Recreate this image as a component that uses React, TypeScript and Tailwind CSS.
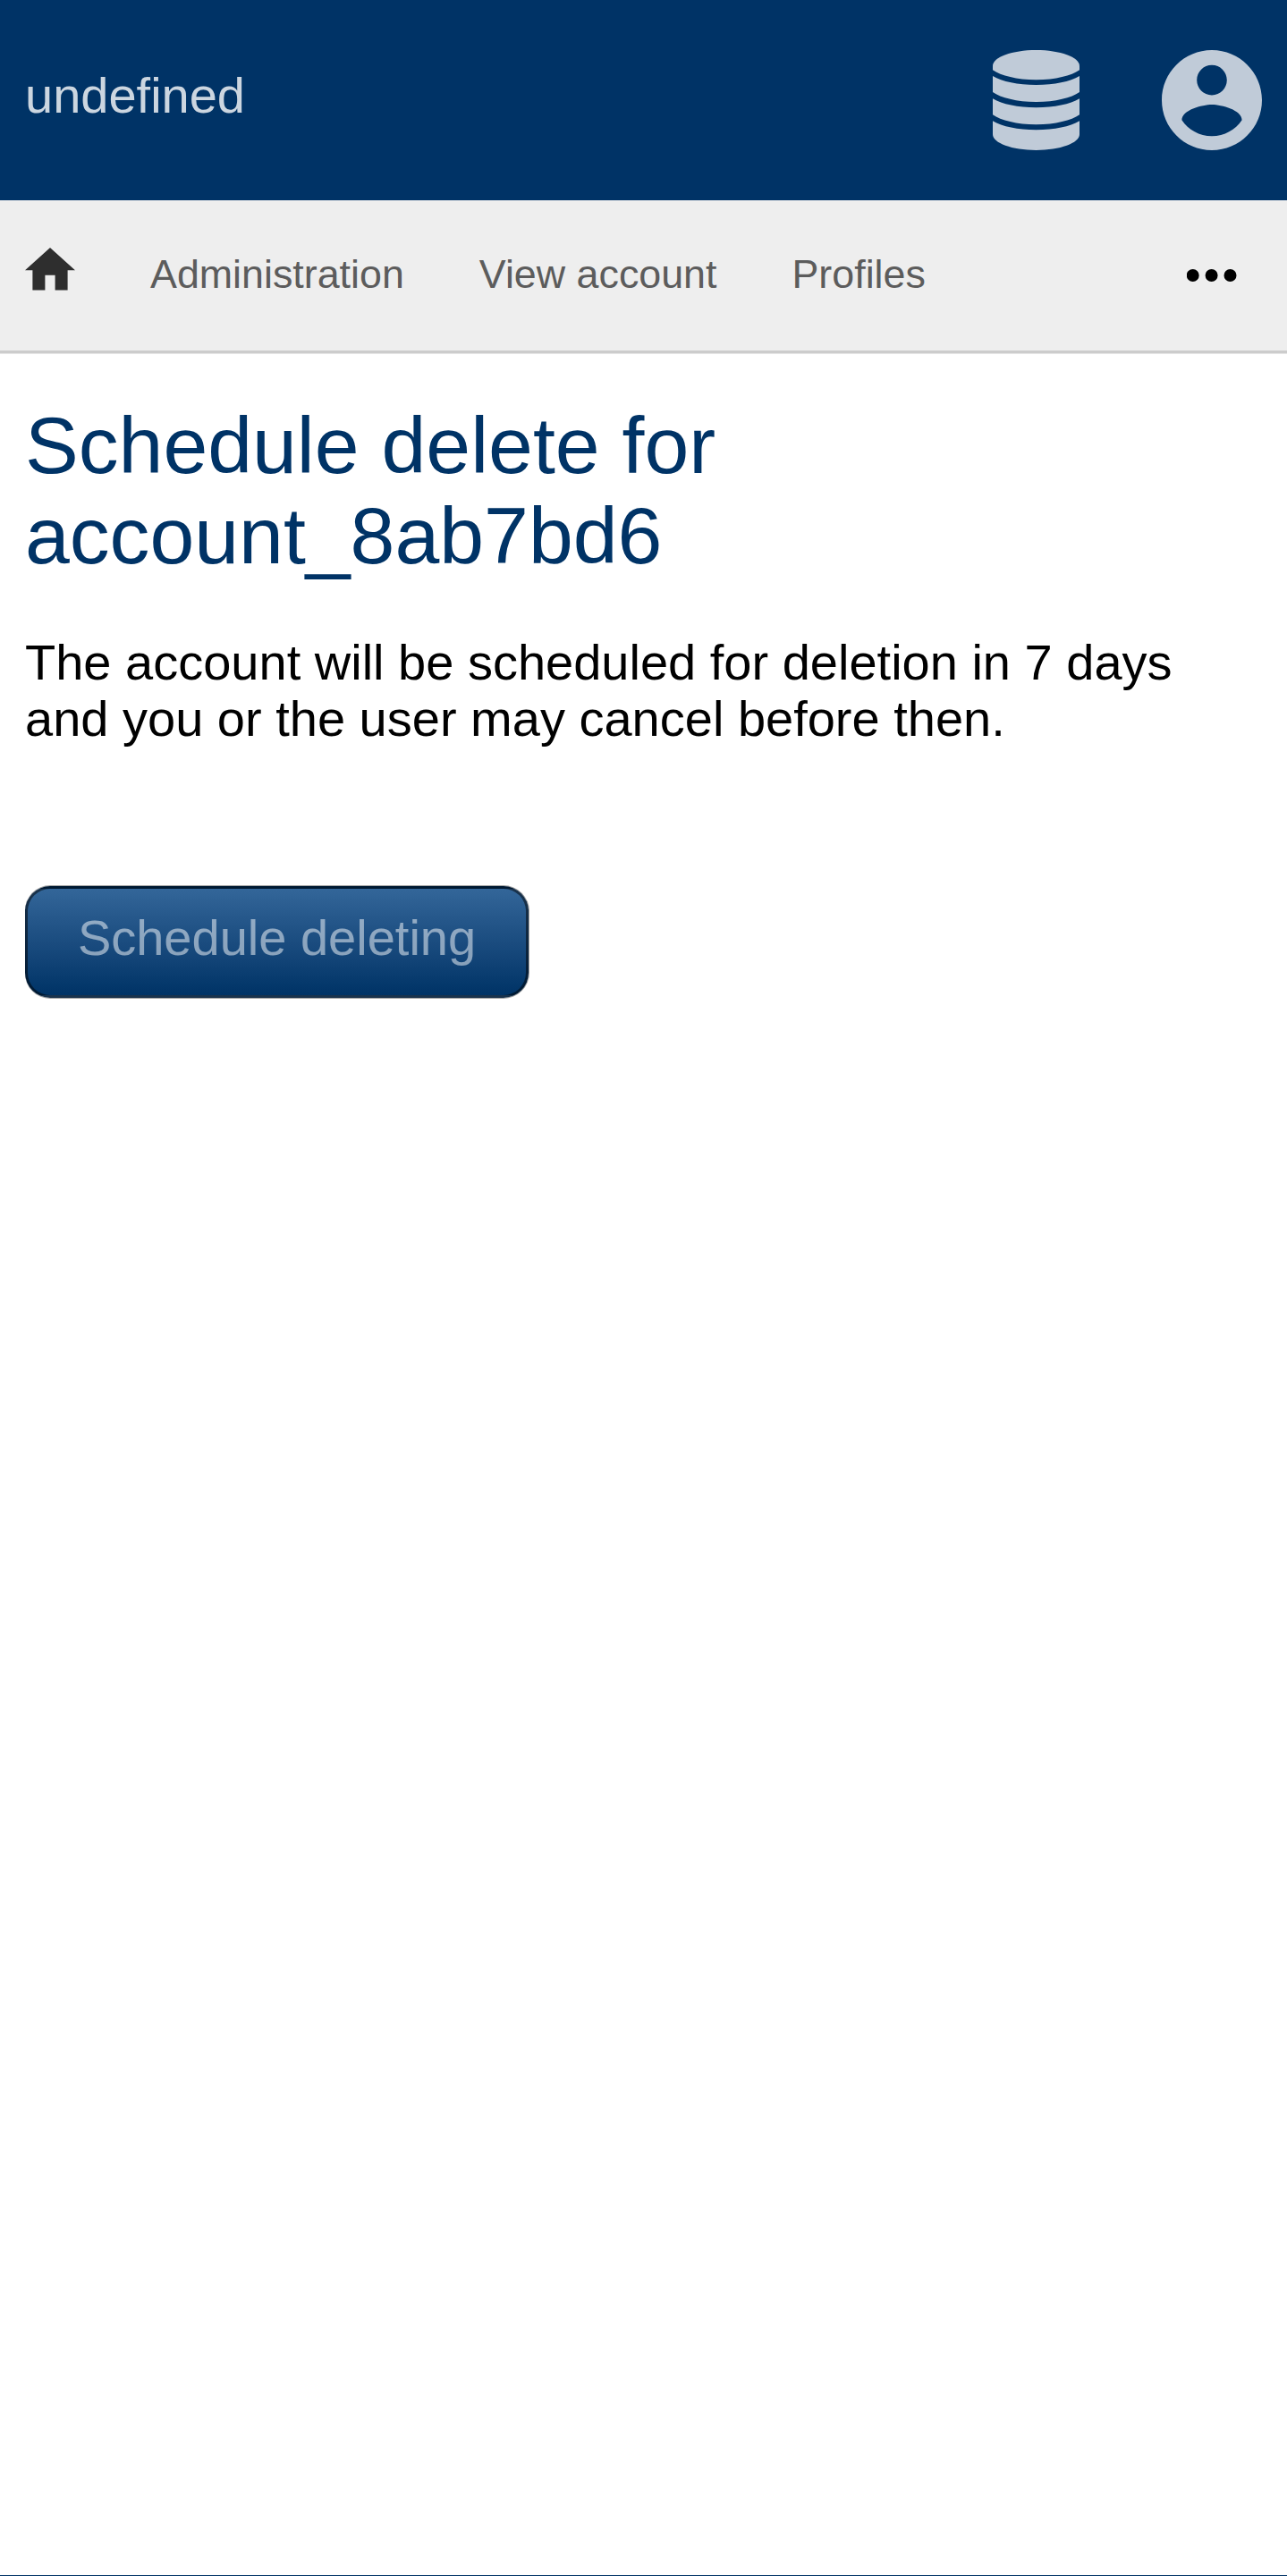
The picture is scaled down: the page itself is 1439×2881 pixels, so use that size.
const navItems = ["Administration", "View account", "Profiles"];

function DatabaseIcon() {
  return (
    <svg className="h-[112px] w-[97px]" viewBox="0 0 291 336" fill="#c0cbd8" aria-hidden="true">
      <path d="M0 53C0 24 65 0 145.500 0S291 24 291 53V67C264 86 210 100 145.500 100S27 86 0 67Z" />
      <path d="M0 87C32 106 84 117 145.500 117S259 106 291 87V141C264 160 210 174 145.500 174S27 160 0 141Z" />
      <path d="M0 163C32 182 84 193 145.500 193S259 182 291 163V217C264 236 210 250 145.500 250S27 236 0 217Z" />
      <path d="M0 238C32 257 84 268 145.500 268S259 257 291 238V283C291 312 226 336 145.500 336S0 312 0 283Z" />
    </svg>
  );
}

function AccountIcon() {
  return (
    <svg className="size-[112px]" viewBox="2 2 20 20" fill="#c0cbd8" aria-hidden="true">
      <path d="M12 2C6.480 2 2 6.480 2 12s4.480 10 10 10 10-4.480 10-10S17.520 2 12 2zm0 3c1.660 0 3 1.340 3 3s-1.340 3-3 3-3-1.340-3-3 1.340-3 3-3zm0 14.200c-2.500 0-4.710-1.280-6-3.220.03-1.990 4-3.080 6-3.080 1.990 0 5.970 1.090 6 3.080-1.290 1.940-3.500 3.220-6 3.220z" />
    </svg>
  );
}

export default function App() {
  return (
    <div className="flex h-[2881px] w-full flex-col border-b border-[#003366] bg-white font-['Liberation_Sans',sans-serif] text-[56px] leading-[63px] text-black">
      <header className="flex h-[224px] shrink-0 items-start justify-between bg-[#003366] px-[28px] pt-[56px]">
        <span className="pt-[19px] text-[#ccd6e0]">undefined</span>
        <div className="flex gap-[92px]">
          <DatabaseIcon />
          <AccountIcon />
        </div>
      </header>

      <nav className="flex h-[171px] shrink-0 items-start border-b-[3px] border-[#cccccc] bg-[#eeeeee] pl-[28px] pt-[53px] text-[44.8px] leading-[58px] text-[#5c5c5c] shadow-[0_1px_0_#e6e6e6]">
        <svg className="h-[48px] w-[56px]" viewBox="2 3 20 17.143" fill="#2e2e2e" aria-hidden="true">
          <path d="M10 20v-6h4v6h5v-8h3L12 3 2 12h3v8z" />
        </svg>
        <div className="ml-[84px] flex gap-[84px]">
          {navItems.map((item) => (
            <a key={item}>{item}</a>
          ))}
        </div>
        <svg className="mt-[24px] mr-[56px] ml-auto h-[14px] w-[56px]" viewBox="0 0 56 14" aria-hidden="true">
          <circle cx="6.700" cy="7" r="7" />
          <circle cx="27.600" cy="7" r="7" />
          <circle cx="48.500" cy="7" r="7" />
        </svg>
      </nav>

      <main className="px-[28px] pt-[53px]">
        <h1 className="w-[900px] text-[89.6px] leading-[101px] text-[#003366]">Schedule delete for account_8ab7bd6</h1>
        <p className="mt-[59px]">
          The account will be scheduled for deletion in 7 days
          <br />
          and you or the user may cancel before then.
        </p>
        <button className="mt-[156px] flex h-[125px] w-[563px] justify-center rounded-[28px] border-[3px] border-black/50 bg-linear-to-b from-[#336699] to-[#003366] pt-[23px] text-white/50 shadow-[1px_0_0_#a6a6a6,0_1px_0_#a6a6a6,0_-1px_0_#a6a6a6]">
          Schedule deleting
        </button>
      </main>
    </div>
  );
}
